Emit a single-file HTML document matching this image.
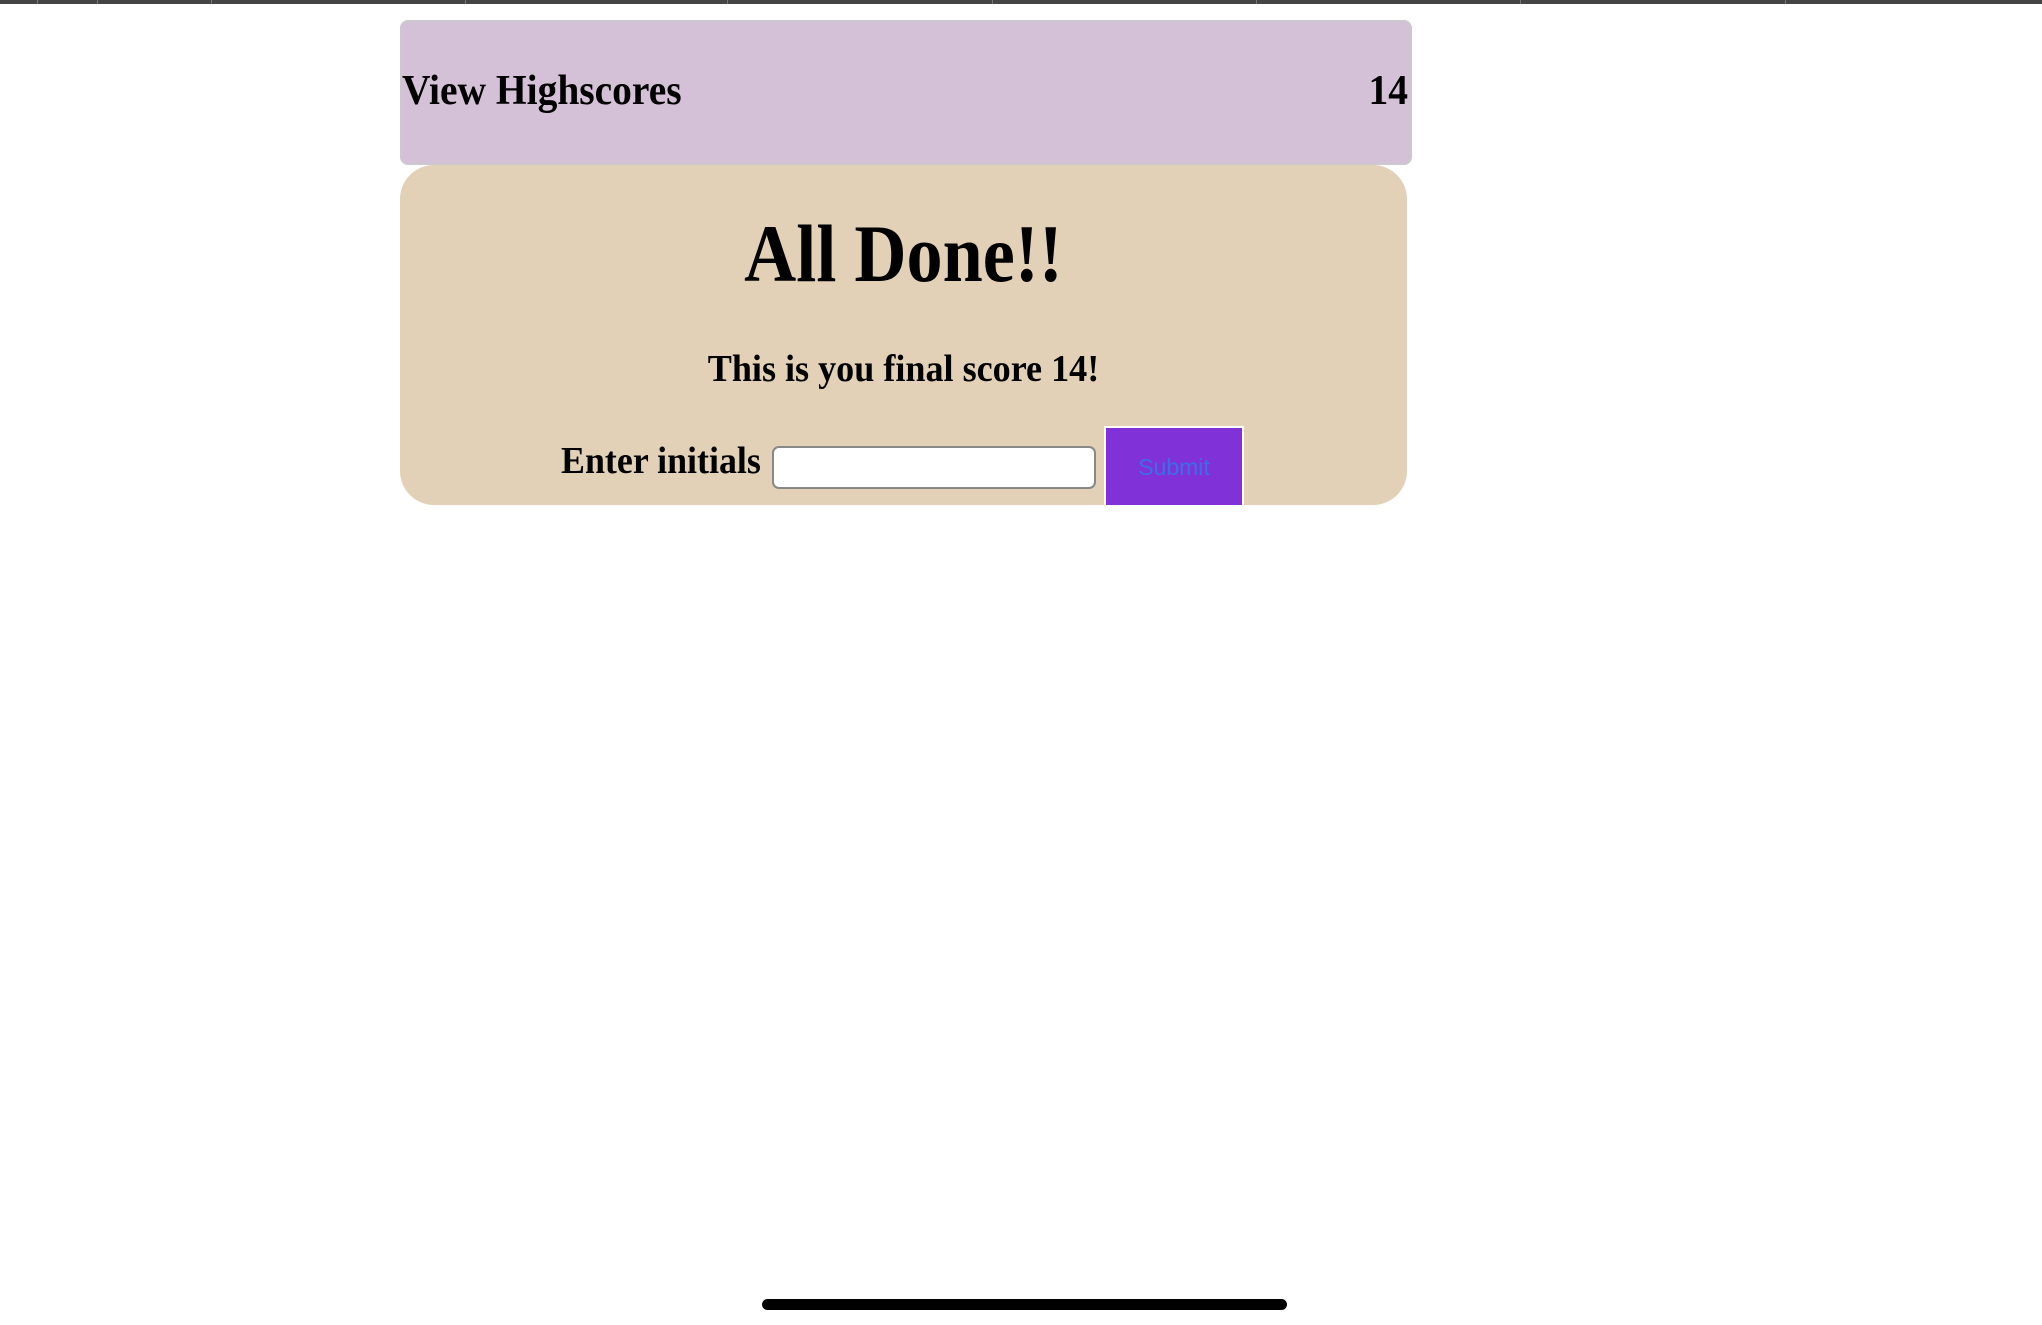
<!DOCTYPE html>
<html><head><style>
body{margin:0;width:2042px;height:1325px;background:#fff;position:relative;overflow:hidden;font-family:"Liberation Serif",serif;}
.top{position:absolute;left:0;top:0;width:2042px;height:4px;background:#444;}
.top i{position:absolute;top:0;width:1px;height:4px;background:#777;}
.hdr{position:absolute;left:400px;top:20px;width:1008px;height:141px;background:#d5c1d7;border:2px solid #cdc8cf;border-radius:8px;}
.hdr span{position:absolute;top:48px;font-weight:bold;font-size:42px;line-height:1;transform:scaleX(0.94);}
.card{position:absolute;left:400px;top:165px;width:1007px;height:340px;background:#e2d1b7;border-radius:34px;}
.t{position:absolute;text-align:center;font-weight:bold;white-space:nowrap;transform-origin:center;}
.inp{position:absolute;left:772px;top:446px;width:320px;height:39px;background:#fff;border:2px solid #888;border-radius:7px;}
.btn{position:absolute;left:1104px;top:426px;width:136px;height:77px;background:#8031d8;border:2px solid #fff;color:#3b6ee8;font:23px "Liberation Sans",sans-serif;text-align:center;line-height:79px;}
.bar{position:absolute;left:762px;top:1299px;width:525px;height:11px;background:#000;border-radius:6px;}
</style></head><body>
<div class="top"><i style="left:37px"></i><i style="left:97px"></i><i style="left:211px"></i><i style="left:465px"></i><i style="left:727px"></i><i style="left:992px"></i><i style="left:1256px"></i><i style="left:1520px"></i><i style="left:1785px"></i></div>
<div class="hdr"><span style="left:0;transform-origin:left">View Highscores</span><span style="right:2px;transform-origin:right">14</span></div>
<div class="card"></div>
<div class="t" style="left:400px;width:1007px;top:213px;font-size:82px;line-height:1;transform:scaleX(0.88);">All Done!!</div>
<div class="t" style="left:400px;width:1007px;top:350px;font-size:38px;line-height:1;transform:scaleX(0.95);">This is you final score 14!</div>
<div style="position:absolute;left:561px;top:442px;font-weight:bold;font-size:38px;line-height:1;white-space:nowrap;transform:scaleX(0.945);transform-origin:left;">Enter initials</div>
<div class="inp"></div>
<div class="btn">Submit</div>
<div class="bar"></div>
</body></html>
